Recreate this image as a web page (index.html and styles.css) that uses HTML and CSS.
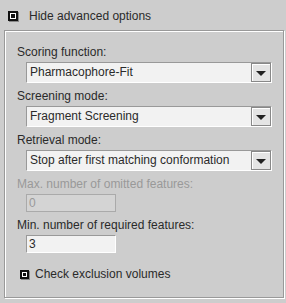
FILE: index.html
```html
<!DOCTYPE html>
<html>
<head>
<meta charset="utf-8">
<link rel="stylesheet" href="styles.css">
</head>
<body>
<div class="top">
  <span class="check"><span class="dot"></span></span>
  <span class="toplabel">Hide advanced options</span>
</div>
<div class="panel">
  <div class="group">
    <div class="label">Scoring function:</div>
    <div class="combo"><div class="value">Pharmacophore-Fit</div><div class="btn"><span class="arrow"></span></div></div>
  </div>
  <div class="group">
    <div class="label">Screening mode:</div>
    <div class="combo"><div class="value">Fragment Screening</div><div class="btn"><span class="arrow"></span></div></div>
  </div>
  <div class="group">
    <div class="label">Retrieval mode:</div>
    <div class="combo"><div class="value">Stop after first matching conformation</div><div class="btn"><span class="arrow"></span></div></div>
  </div>
  <div class="group">
    <div class="label disabled">Max. number of omitted features:</div>
    <div class="field disabled">0</div>
  </div>
  <div class="group">
    <div class="label">Min. number of required features:</div>
    <div class="field">3</div>
  </div>
  <div class="checkrow">
    <span class="check small"><span class="dot"></span></span>
    <span class="checklabel">Check exclusion volumes</span>
  </div>
</div>
</body>
</html>
```
FILE: styles.css
```css
html, body {
  margin: 0;
  padding: 0;
}
body {
  width: 286px;
  height: 303px;
  background: #cdcdcd;
  font-family: "Liberation Sans", Arial, sans-serif;
  font-size: 12px;
  color: #2a2a2a;
  overflow: hidden;
}
.top {
  display: flex;
  align-items: center;
  height: 16px;
  padding: 8px 0 0 8px;
}
.check {
  box-sizing: border-box;
  width: 10px;
  height: 10px;
  border: 2px solid #111;
  background: #fff;
  display: flex;
  align-items: center;
  justify-content: center;
  box-shadow: 1px 1px 0 #888;
}
.check .dot {
  width: 4px;
  height: 4px;
  background: #111;
}
.toplabel {
  margin-left: 11px;
}
.panel {
  box-sizing: border-box;
  margin: 6px 0 0 4px;
  width: 280px;
  height: 268px;
  border: 1px solid #999;
  box-shadow: inset 1px 1px 0 #fff, 1px 1px 0 #fff;
  padding: 13px 11px 0 12px;
  display: flex;
  flex-direction: column;
  gap: 5px;
}
.group {
  display: flex;
  flex-direction: column;
  gap: 2px;
}
.label {
  line-height: 16px;
  height: 16px;
  white-space: nowrap;
}
.label.disabled {
  color: #999;
}
.combo {
  margin-left: 9px;
  height: 21px;
  display: flex;
  box-sizing: border-box;
  border-top: 1px solid #999;
  border-left: 1px solid #999;
  border-right: 1px solid #fff;
  border-bottom: 1px solid #fff;
  background: #f2f2f2;
}
.value {
  flex: 1;
  line-height: 19px;
  padding-left: 3px;
  white-space: nowrap;
  overflow: hidden;
}
.btn {
  box-sizing: border-box;
  width: 20px;
  height: 19px;
  border: 1px solid #888;
  box-shadow: inset 1px 1px 0 #fff;
  background: #e4e4e4;
  display: flex;
  align-items: center;
  justify-content: center;
}
.arrow {
  width: 0;
  height: 0;
  border-left: 5px solid transparent;
  border-right: 5px solid transparent;
  border-top: 5px solid #222;
  margin-top: 1px;
}
.field {
  margin-left: 9px;
  box-sizing: border-box;
  width: 90px;
  height: 18px;
  border-top: 1px solid #999;
  border-left: 1px solid #999;
  border-right: 1px solid #fff;
  border-bottom: 1px solid #fff;
  background: #f2f2f2;
  line-height: 16px;
  padding-left: 2px;
}
.field.disabled {
  background: #d4d4d4;
  color: #999;
  border-color: #aaa;
}
.checkrow {
  display: flex;
  align-items: center;
  margin-top: 8px;
  margin-left: 3px;
  height: 16px;
}
.check.small {
  width: 9px;
  height: 9px;
}
.check.small .dot {
  width: 3px;
  height: 3px;
}
.checklabel {
  margin-left: 6px;
}
```
